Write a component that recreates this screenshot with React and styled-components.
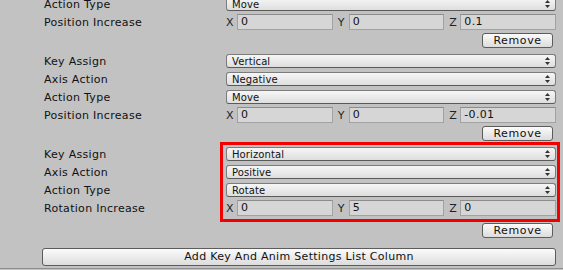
import React from "react";
import styled, { createGlobalStyle } from "styled-components";

const GlobalStyle = createGlobalStyle`
  html, body {
    margin: 0;
    padding: 0;
    background: #c2c2c2;
    overflow: hidden;
  }
  body {
    font-family: "DejaVu Sans", Verdana, sans-serif;
    color: #111;
  }
`;

const Inspector = styled.div`
  width: 563px;
  height: 270px;
  overflow: hidden;
  box-sizing: border-box;
`;

const List = styled.div`
  margin-top: -41px;
  display: flex;
  flex-direction: column;
`;

const Block = styled.section`
  display: flex;
  flex-direction: column;
  margin-bottom: 4px;
`;

const Rows = styled.div`
  position: relative;

  ${({ $highlight }) =>
    $highlight &&
    `
    &::after {
      content: "";
      position: absolute;
      top: -3px;
      bottom: -5px;
      left: 220px;
      right: 3px;
      border: 3px solid #f00000;
      pointer-events: none;
    }
  `}
`;

const Row = styled.div`
  height: 18px;
  display: grid;
  grid-template-columns: 182px 330px;
  align-items: center;
  padding-left: 44px;
`;

const Label = styled.span`
  font-size: 11px;
  letter-spacing: 0.3px;
  white-space: nowrap;
`;

const Popup = styled.div`
  height: 14px;
  box-sizing: border-box;
  border: 1px solid #7c7c7c;
  border-bottom-color: #5a5a5a;
  border-radius: 3px;
  background: linear-gradient(#f6f6f6, #dedede);
  display: flex;
  align-items: center;
  justify-content: space-between;
  padding: 0 5px 0 5px;
  font-size: 10px;
  letter-spacing: 0.1px;
  color: #111;
`;

const Arrows = () => (
  <svg width="5" height="8" viewBox="0 0 5 8">
    <path d="M2.5 0 L5 3 L0 3 Z M0 5 L5 5 L2.5 8 Z" fill="#333" />
  </svg>
);

const Vector = styled.div`
  display: grid;
  grid-template-columns: repeat(3, 1fr);
  gap: 5px;
`;

const Axis = styled.div`
  display: flex;
  align-items: center;
`;

const AxisLabel = styled.span`
  width: 11px;
  flex: none;
  font-size: 11px;
  color: #222;
`;

const Field = styled.div`
  flex: 1;
  height: 16px;
  box-sizing: border-box;
  border: 1px solid #a2a2a2;
  border-top-color: #8c8c8c;
  background: #d6d6d6;
  font-size: 11px;
  letter-spacing: 0.3px;
  padding-left: 3px;
  line-height: 14px;
`;

const ButtonRow = styled.div`
  display: flex;
  justify-content: flex-end;
  padding-right: 10px;
  margin-top: ${({ $gap }) => $gap}px;
`;

const Button = styled.button`
  width: ${({ $width }) => $width}px;
  height: ${({ $height }) => $height}px;
  box-sizing: border-box;
  margin: 0;
  padding: 0;
  border: 1px solid #5c5c5c;
  border-radius: 3px;
  background: linear-gradient(#fbfbfb, #dcdcdc);
  font-family: "DejaVu Sans", Verdana, sans-serif;
  font-size: 11px;
  letter-spacing: 0.6px;
  color: #111;
  line-height: 1;
`;

const Footer = styled.div`
  padding: 3px 7px 0 42px;
  height: 27px;
  box-sizing: border-box;
  border-bottom: 1px solid #8e8e8e;
`;

const AddButton = styled(Button)`
  width: 100%;
  letter-spacing: 0.3px;
`;

const blocks = [
  {
    key: "Vertical",
    axis: "Positive",
    action: "Move",
    vecLabel: "Position Increase",
    vec: ["0", "0", "0.1"],
  },
  {
    key: "Vertical",
    axis: "Negative",
    action: "Move",
    vecLabel: "Position Increase",
    vec: ["0", "0", "-0.01"],
  },
  {
    key: "Horizontal",
    axis: "Positive",
    action: "Rotate",
    vecLabel: "Rotation Increase",
    vec: ["0", "5", "0"],
    highlight: true,
  },
];

const PopupRow = ({ label, value }) => (
  <Row>
    <Label>{label}</Label>
    <Popup>
      <span>{value}</span>
      <Arrows />
    </Popup>
  </Row>
);

const SettingsBlock = ({ data }) => (
  <Block>
    <Rows $highlight={data.highlight}>
      <PopupRow label="Key Assign" value={data.key} />
      <PopupRow label="Axis Action" value={data.axis} />
      <PopupRow label="Action Type" value={data.action} />
      <Row>
        <Label>{data.vecLabel}</Label>
        <Vector>
          {["X", "Y", "Z"].map((axis, i) => (
            <Axis key={axis}>
              <AxisLabel>{axis}</AxisLabel>
              <Field>{data.vec[i]}</Field>
            </Axis>
          ))}
        </Vector>
      </Row>
    </Rows>
    <ButtonRow $gap={data.highlight ? 6 : 2}>
      <Button $width={71} $height={15}>
        Remove
      </Button>
    </ButtonRow>
  </Block>
);

export default function App() {
  return (
    <>
      <GlobalStyle />
      <Inspector>
        <List>
          {blocks.map((b, i) => (
            <SettingsBlock key={i} data={b} />
          ))}
        </List>
        <Footer>
          <AddButton $height={18}>Add Key And Anim Settings List Column</AddButton>
        </Footer>
      </Inspector>
    </>
  );
}
